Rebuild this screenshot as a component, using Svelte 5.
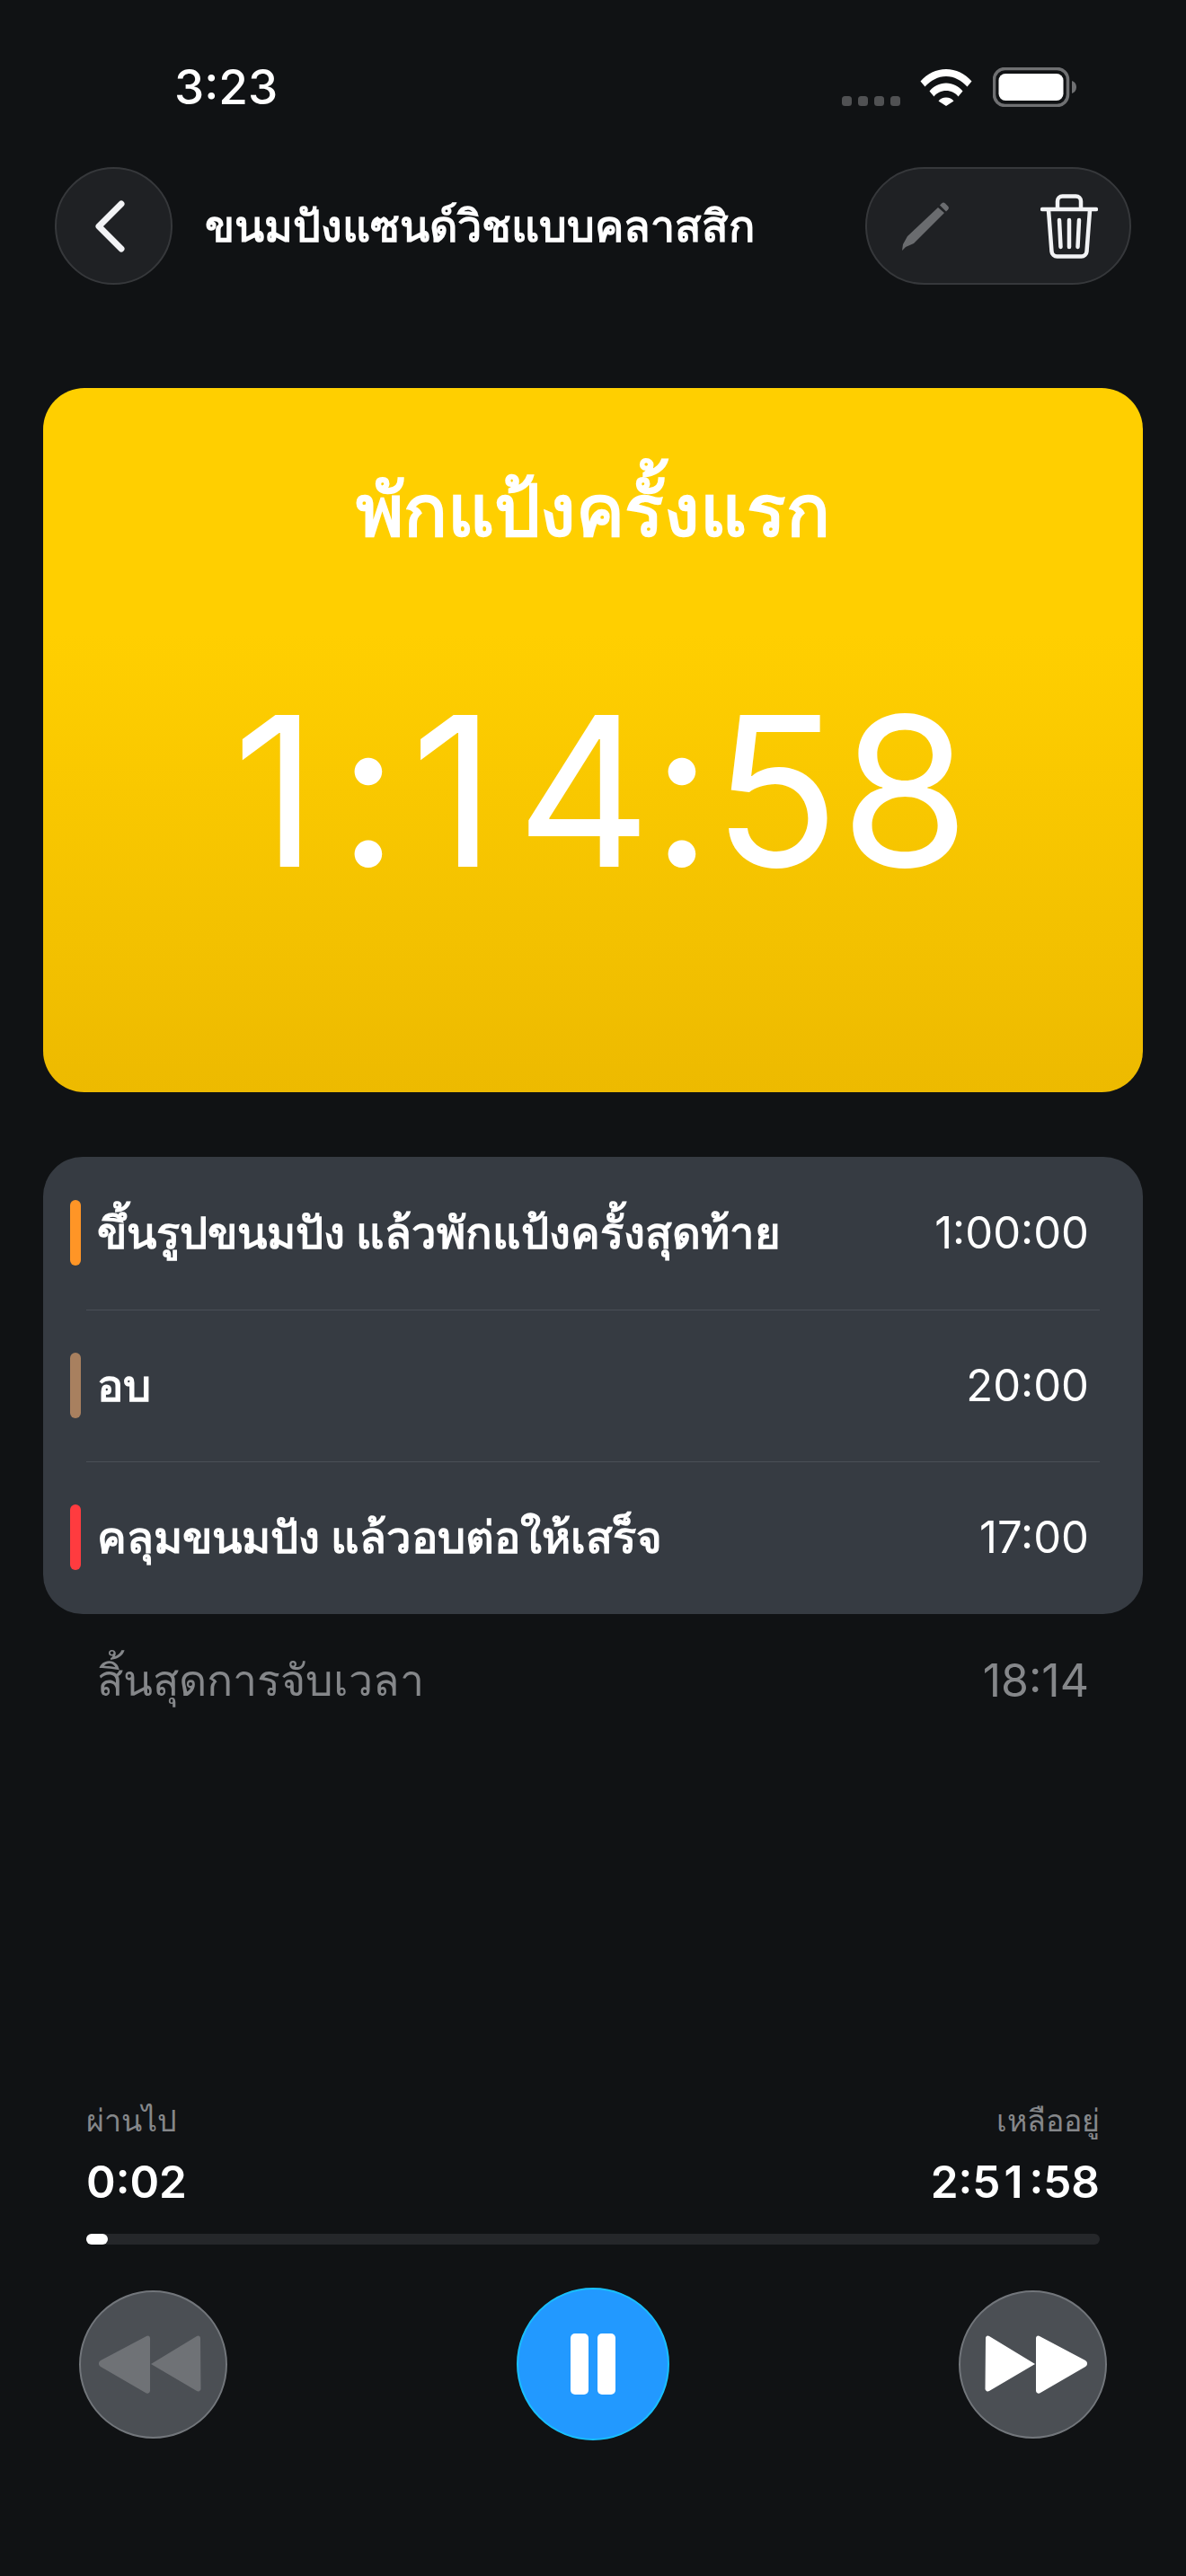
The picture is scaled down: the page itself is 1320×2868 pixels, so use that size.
<script>
  const rows = [
    { name: 'ขึ้นรูปขนมปัง แล้วพักแป้งครั้งสุดท้าย', time: '1:00:00', color: '#ff9526' },
    { name: 'อบ', time: '20:00', color: '#a8805f' },
    { name: 'คลุมขนมปัง แล้วอบต่อให้เสร็จ', time: '17:00', color: '#ff3b3f' }
  ];
</script>

{#snippet digits(s)}{#each [...s] as c}{#if c === '1'}<span class="one">1</span>{:else}{c}{/if}{/each}{/snippet}

<div class="app">
  <header class="status">
    <span class="clock">3:23</span>
    <div class="status-icons">
      <div class="dots"><i></i><i></i><i></i><i></i></div>
      <svg class="wifi" viewBox="0 0 58 42" width="58" height="42">
        <path d="M0.5 14.5C8 6 18 1 29 1s21 5 28.500 13.500l-5 6C46 13.500 38 9 29 9S12 13.500 5.500 20.500z" fill="#fff"/>
        <path d="M10.500 25.500C15 20 21.500 16.500 29 16.500s14 3.500 18.500 9l-5 6C39.500 27.500 34.500 25 29 25s-10.500 2.500-13.500 6.500z" fill="#fff"/>
        <path d="M20.500 36.500C22.500 34 25.500 32.500 29 32.500s6.500 1.500 8.500 4L29 42z" fill="#fff"/>
      </svg>
      <svg class="battery" viewBox="0 0 93 44" width="93" height="44">
        <rect x="1.500" y="1.500" width="82" height="41" rx="12" fill="none" stroke="#6f7072" stroke-width="3.500"/>
        <rect x="6.500" y="7" width="72" height="30" rx="7.500" fill="#fff"/>
        <path d="M88 15c3 1 5 3.500 5 7s-2 6-5 7z" fill="#6f7072"/>
      </svg>
    </div>
  </header>

  <nav class="nav">
    <button class="round back" aria-label="กลับ">
      <svg viewBox="0 0 34 58" width="34" height="58"><path d="M30 4 5 29l25 25" fill="none" stroke="#f2f3f5" stroke-width="7" stroke-linecap="round" stroke-linejoin="round"/></svg>
    </button>
    <h1>ขนมปังแซนด์วิชแบบคลาสสิก</h1>
    <div class="pill">
      <svg class="pencil" viewBox="0 0 54 54" width="54" height="54">
        <path d="M41 6 48 12 14 46 5 50 1 54 2 47 7 38z" fill="#6a6c6f"/>
        <path d="M45 1.500a3 3 0 0 1 4 0l3 3a3 3 0 0 1 0 4l-2 2-7-7z" fill="#6a6c6f"/>
      </svg>
      <svg class="trash" viewBox="0 0 64 72" width="64" height="72">
        <g fill="none" stroke="#f2f3f5" stroke-width="4.500" stroke-linecap="round" stroke-linejoin="round">
          <path d="M2 17h60"/>
          <path d="M19 16V8a5.500 5.500 0 0 1 5.500-5.500h15A5.500 5.500 0 0 1 45 8v8"/>
          <path d="M9 18l3.500 46a6 6 0 0 0 6 5.500h27a6 6 0 0 0 6-5.500L55 18"/>
          <path d="M21 29l1.500 30M32 29v30M43 29l-1.500 30"/>
        </g>
      </svg>
    </div>
  </nav>

  <section class="hero">
    <h2>พักแป้งครั้งแรก</h2>
    <div class="big">{@render digits('1:14:58')}</div>
  </section>

  <section class="list">
    {#each rows as r}
      <div class="row">
        <span class="tag" style="background:{r.color}"></span>
        <span class="name">{r.name}</span>
        <span class="time">{r.time}</span>
      </div>
    {/each}
  </section>

  <div class="end">
    <span class="end-name">สิ้นสุดการจับเวลา</span>
    <span class="end-time">18:14</span>
  </div>

  <footer class="player">
    <div class="labels">
      <div><div class="lab">ผ่านไป</div><div class="val">{@render digits('0:02')}</div></div>
      <div class="right"><div class="lab">เหลืออยู่</div><div class="val">{@render digits('2:51:58')}</div></div>
    </div>
    <div class="track"><div class="fill"></div></div>
    <div class="controls">
      <button class="ctl rew" aria-label="ย้อน">
        <svg viewBox="0 0 114 66" width="114" height="66"><path d="M57 4a2.500 2.500 0 0 0-4-2L2 29a4 4 0 0 0 0 7l50 29a3 3 0 0 0 5-2zM113 4a2.500 2.500 0 0 0-4-2L58 33l51 30a3 3 0 0 0 4.500-2z" fill="#6f7276"/></svg>
      </button>
      <button class="pause" aria-label="หยุด"><i></i><i></i></button>
      <button class="ctl fwd" aria-label="ถัดไป">
        <svg viewBox="0 0 114 66" width="114" height="66"><path d="M1 4a2.500 2.500 0 0 1 4-2l51 31L5 63a3 3 0 0 1-4.500-2zM57 4a2.500 2.500 0 0 1 4-2l51 27a4 4 0 0 1 0 7L62 65a3 3 0 0 1-5-2z" fill="#fff"/></svg>
      </button>
    </div>
  </footer>
</div>

<style>
  :global(body) { margin: 0; background: #101214; }
  .app {
    width: 1320px; height: 2868px; display: flex; flex-direction: column;
    background: #101214; color: #fff; box-sizing: border-box;
    font-family: Inter, "Noto Sans", sans-serif;
  }
  .status { height: 186px; box-sizing: border-box; flex: none; display: flex; justify-content: space-between; align-items: flex-start; padding: 75px 122px 0 194px; }
  .clock { font-size: 53px; font-weight: 500; line-height: 44px; }
  .status-icons { display: flex; align-items: flex-end; height: 44px; }
  .dots { display: flex; gap: 7px; margin-bottom: 1px; margin-right: 22px; }
  .dots i { width: 11px; height: 11px; border-radius: 3.500px; background: #505153; }
  .wifi { margin-right: 23px; margin-bottom: 1px; }
  .nav { height: 131px; flex: none; display: flex; align-items: center; padding: 0 61px; }
  .round, .pill { background: #1f2124; border: 2px solid #36383b; box-sizing: border-box; }
  .round { width: 131px; height: 131px; border-radius: 50%; display: flex; align-items: center; justify-content: center; padding: 0; }
  .back svg { margin-right: 10px; }
  h1 { font-size: 48.500px; font-weight: 700; margin: 0 0 0 36px; flex: 1; white-space: nowrap; line-height: 60px; }
  .pill { width: 296px; height: 131px; border-radius: 66px; display: flex; align-items: center; justify-content: space-between; padding: 0 35px 0 38px; }
  .hero {
    margin: 115px 48px 0; height: 784px; border-radius: 46px; flex: none;
    background: linear-gradient(#ffcf00 35%, #edba00 100%);
    display: flex; flex-direction: column; align-items: center;
  }
  h2 { font-size: 81px; font-weight: 700; margin: 86px 0 0; line-height: 100px; }
  .big { font-size: 232px; font-weight: 400; letter-spacing: 1px; line-height: 232px; margin-top: 147px; padding-left: 6px; }
  .big .one { margin: 0 22px 0 13px; }
  .list { margin: 72px 48px 0; height: 509px; background: #363b42; border-radius: 44px; flex: none; display: flex; flex-direction: column; }
  .row { position: relative; flex: 1; display: flex; align-items: center; justify-content: space-between; padding: 0 60px; }
  .row + .row::before { content: ''; position: absolute; left: 48px; right: 48px; top: 0; height: 1px; background: #4a4f57; }
  .tag { position: absolute; left: 30px; top: 48px; width: 12px; height: 73px; border-radius: 6px; }
  .name { font-size: 49px; font-weight: 700; line-height: 60px; }
  .time { font-size: 49px; font-weight: 400; line-height: 60px; }
  .end { display: flex; justify-content: space-between; align-items: center; padding: 44px 108px 0; color: #85878a; flex: none; }
  .end-name { font-size: 48.300px; line-height: 60px; }
  .end-time { font-size: 50px; font-weight: 400; line-height: 60px; }
  .player { margin-top: auto; padding: 0 96px 151px; flex: none; }
  .labels { display: flex; justify-content: space-between; }
  .right { text-align: right; }
  .lab { font-size: 34px; color: #85878a; line-height: 52px; }
  .val { font-size: 49.500px; font-weight: 600; line-height: 60px; margin-top: 12px; }
  .val .one { margin: 0 7px 0 4px; }
  .track { height: 12px; border-radius: 6px; background: #25272a; margin-top: 28px; }
  .fill { width: 24px; height: 12px; border-radius: 6px; background: #fff; }
  .controls { display: flex; justify-content: space-between; align-items: center; margin: 48px -8px 0; }
  button { border: none; cursor: pointer; }
  .ctl { width: 165px; height: 165px; box-sizing: border-box; border-radius: 50%; background: #4b4f54; border: 2px solid #72767b; display: flex; align-items: center; justify-content: center; padding: 0; }
  .rew svg { margin-right: 8px; }
  .fwd svg { margin-left: 6px; }
  .pause { width: 170px; height: 170px; border-radius: 50%; background: #2299ff; border: 2px solid #18c0ff; box-sizing: border-box; display: flex; align-items: center; justify-content: center; gap: 10px; padding: 0; }
  .pause i { width: 20px; height: 68px; border-radius: 5px; background: #fff; }
</style>
